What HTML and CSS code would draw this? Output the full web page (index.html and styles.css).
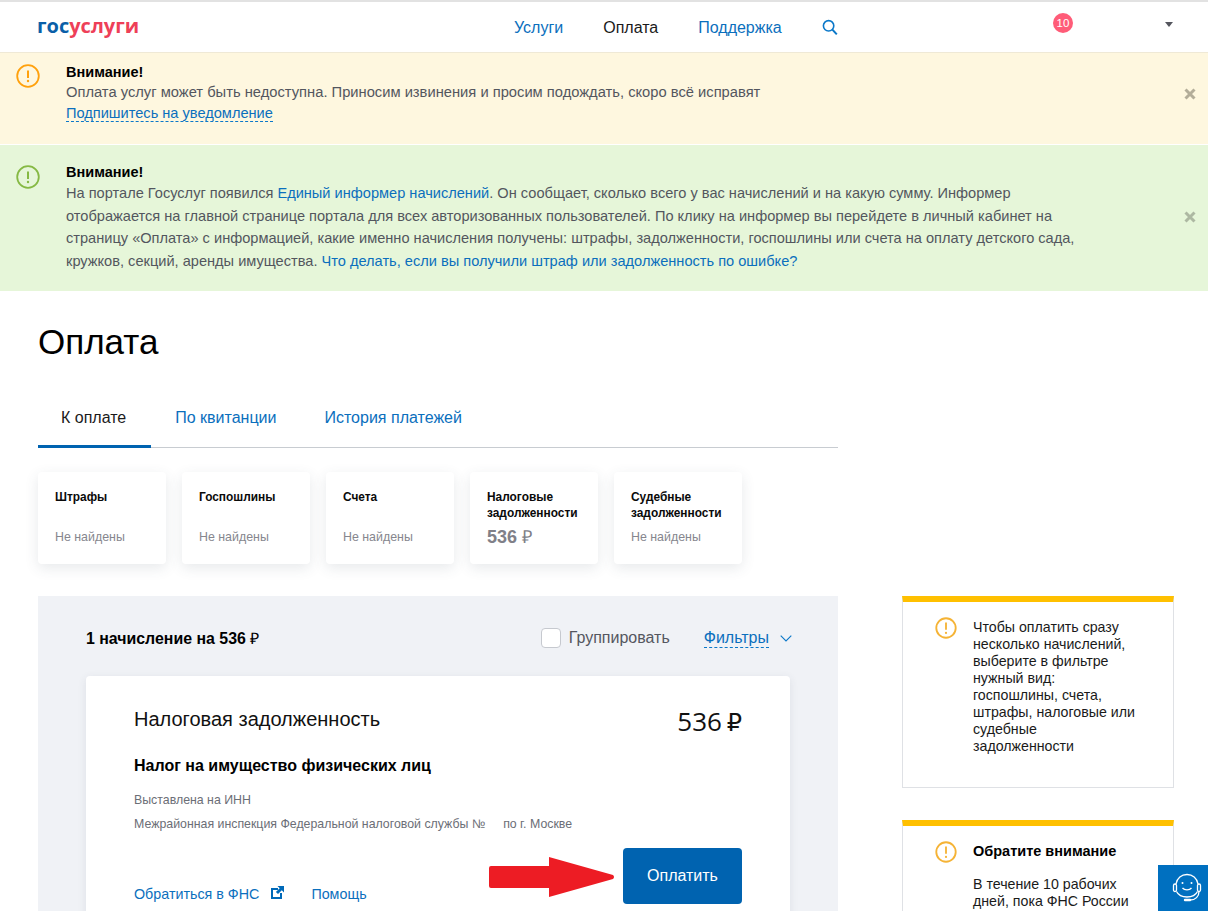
FILE: index.html
```html
<!DOCTYPE html>
<html lang="ru">
<head>
<meta charset="utf-8">
<title>Оплата</title>
<link rel="stylesheet" href="styles.css">
</head>
<body>
<header class="header">
  <a class="logo"><span class="logo-blue">гос</span><span class="logo-red">услуги</span></a>
  <nav class="nav">
    <a class="nav-link">Услуги</a>
    <a class="nav-link nav-active">Оплата</a>
    <a class="nav-link">Поддержка</a>
    <svg class="search" width="16" height="17" viewBox="0 0 16 17"><circle cx="6.6" cy="6.8" r="5.2" fill="none" stroke="#0b78c9" stroke-width="1.6"/><path d="M10.4 10.6l4.4 4.8" stroke="#0b78c9" stroke-width="2" fill="none"/></svg>
  </nav>
  <div class="user">
    <span class="badge">10</span>
    <span class="caret"></span>
  </div>
</header>

<section class="alert alert-yellow">
  <svg class="alert-icon" width="24" height="24" viewBox="0 0 24 24"><circle cx="12" cy="12" r="10.8" fill="none" stroke="#ffa10d" stroke-width="1.8"/><path d="M12 6.5v7.5" stroke="#ffa10d" stroke-width="2"/><circle cx="12" cy="17" r="1.2" fill="#ffa10d"/></svg>
  <div class="alert-body">
    <div class="alert-title">Внимание!</div>
    <div>Оплата услуг может быть недоступна. Приносим извинения и просим подождать, скоро всё исправят</div>
    <a class="dashed alert-sub">Подпишитесь на уведомление</a>
  </div>
  <svg class="close" width="12" height="12" viewBox="0 0 12 12"><path d="M1.500 1.500l9 9m0-9l-9 9" stroke="#b3ad99" stroke-width="3" fill="none"/></svg>
</section>

<section class="alert alert-green">
  <svg class="alert-icon" width="24" height="24" viewBox="0 0 24 24"><circle cx="12" cy="12" r="10.8" fill="none" stroke="#86b944" stroke-width="1.8"/><path d="M12 6.5v7.5" stroke="#86b944" stroke-width="2"/><circle cx="12" cy="17" r="1.2" fill="#86b944"/></svg>
  <div class="alert-body">
    <div class="alert-title">Внимание!</div>
    <div>На портале Госуслуг появился <a class="link">Единый информер начислений</a>. Он сообщает, сколько всего у вас начислений и на какую сумму. Информер отображается на главной странице портала для всех авторизованных пользователей. По клику на информер вы перейдете в личный кабинет на страницу «Оплата» с информацией, какие именно начисления получены: штрафы, задолженности, госпошлины или счета на оплату детского сада, кружков, секций, аренды имущества. <a class="link">Что делать, если вы получили штраф или задолженность по ошибке?</a></div>
  </div>
  <svg class="close close-green" width="12" height="12" viewBox="0 0 12 12"><path d="M1.500 1.500l9 9m0-9l-9 9" stroke="#adb8a2" stroke-width="3" fill="none"/></svg>
</section>

<main class="page">
  <h1 class="title">Оплата</h1>
  <div class="tabs">
    <a class="tab tab-active">К оплате</a>
    <a class="tab">По квитанции</a>
    <a class="tab">История платежей</a>
  </div>
  <div class="cards">
    <div class="card"><div class="card-title">Штрафы</div><div class="card-note">Не найдены</div></div>
    <div class="card"><div class="card-title">Госпошлины</div><div class="card-note">Не найдены</div></div>
    <div class="card"><div class="card-title">Счета</div><div class="card-note">Не найдены</div></div>
    <div class="card"><div class="card-title">Налоговые<br>задолженности</div><div class="card-sum">536 <span class="rub">₽</span></div></div>
    <div class="card"><div class="card-title">Судебные<br>задолженности</div><div class="card-note">Не найдены</div></div>
  </div>

  <div class="columns">
    <section class="panel">
      <div class="panel-head">
        <div class="panel-count">1 начисление на 536 <span class="rub">₽</span></div>
        <label class="group"><span class="checkbox"></span>Группировать</label>
        <a class="filters"><span class="dashed">Фильтры</span>
          <svg width="12" height="7" viewBox="0 0 12 7"><path d="M.7.7L6 6l5.3-5.3" fill="none" stroke="#0b78c9" stroke-width="1.1"/></svg>
        </a>
      </div>
      <article class="bill">
        <div class="bill-top">
          <div class="bill-type">Налоговая задолженность</div>
          <div class="bill-sum">536 <span class="rub-big">₽</span></div>
        </div>
        <div class="bill-name">Налог на имущество физических лиц</div>
        <div class="bill-meta">Выставлена на ИНН</div>
        <div class="bill-meta bill-meta-2">Межрайонная инспекция Федеральной налоговой службы №<span class="gap"></span>по г. Москве</div>
        <div class="bill-foot">
          <a class="bill-link">Обратиться в ФНС</a>
          <svg class="ext" width="13" height="13" viewBox="0 0 13 13"><path d="M0 2h7v2H2v7h7V7h2v6H0z" fill="#0069b8"/><path d="M6.500 0H13v6.500l-2.200-2.200-3.800 3.800-2.100-2.100 3.800-3.800z" fill="#0069b8"/></svg>
          <a class="bill-link help">Помощь</a>
          <svg class="arrow" width="126" height="41" viewBox="0 0 126 41"><path d="M2 9h58V0l64 18q2 2 0 4L60 40v-9H2q-2 0-2-2V11q0-2 2-2z" fill="#ed1c24"/></svg>
          <a class="pay">Оплатить</a>
        </div>
      </article>
    </section>

    <aside class="side">
      <div class="note">
        <svg class="note-icon" width="22" height="22" viewBox="0 0 24 24"><circle cx="12" cy="12" r="10.6" fill="none" stroke="#f5b335" stroke-width="2"/><path d="M12 6v8" stroke="#f5b335" stroke-width="2"/><circle cx="12" cy="17.400" r="1.200" fill="#f5b335"/></svg>
        <div class="note-text">Чтобы оплатить сразу несколько начислений, выберите в фильтре нужный вид: госпошлины, счета, штрафы, налоговые или судебные задолженности</div>
      </div>
      <div class="note">
        <svg class="note-icon" width="22" height="22" viewBox="0 0 24 24"><circle cx="12" cy="12" r="10.6" fill="none" stroke="#f5b335" stroke-width="2"/><path d="M12 6v8" stroke="#f5b335" stroke-width="2"/><circle cx="12" cy="17.400" r="1.200" fill="#f5b335"/></svg>
        <div class="note-text">
          <div class="note-title">Обратите внимание</div>
          В течение 10 рабочих дней, пока ФНС России
        </div>
      </div>
    </aside>
  </div>
</main>

<a class="chat">
  <svg width="32" height="32" viewBox="0 0 32 32" fill="none" stroke="#fff" stroke-width="1.300"><path d="M5 12C6 6 10.500 2.500 16 2.500S26 6 27 12"/><path d="M5.500 19.500C7.500 23.500 11.500 25 16 25s8.500-1.500 10.500-5.500"/><rect x="2.500" y="12" width="3" height="7.500" rx="1.500"/><rect x="26.500" y="12" width="3" height="7.500" rx="1.500"/><path d="M11.500 16c2 2.500 7 2.500 9 0"/><path d="M28 19.500c0 5-3.500 8.500-9 8.500"/><path d="M14 28h5" stroke-width="2.400" stroke-linecap="round"/><circle cx="11.500" cy="11" r="1" fill="#fff" stroke="none"/><circle cx="20.500" cy="11" r="1" fill="#fff" stroke="none"/></svg>
</a>
</body>
</html>
```

FILE: styles.css
```css
* { box-sizing: border-box; }
html, body { height: 911px; overflow: hidden; }
body {
  margin: 0;
  background: #fff;
  color: #000;
  font-family: "Liberation Sans", Arial, sans-serif;
  font-size: 14px;
}
a { cursor: pointer; }

.header {
  height: 53px;
  border-top: 2px solid #e2e2e2;
  border-bottom: 1px solid #efe9d6;
  display: flex;
  align-items: center;
  position: relative;
  padding-left: 37px;
}
.logo {
  font-family: "Open Sans", sans-serif;
  font-size: 20px;
  font-weight: 700;
  line-height: 24px;
  width: 477px;
  margin-top: -2px;
}
.logo-blue { color: #0a5fa8; }
.logo-red { color: #ee3f58; }
.nav { display: flex; align-items: center; font-size: 16px; gap: 40px; margin-top: 1px; }
.nav-link { color: #0b6fbd; }
.nav-active { color: #1a1a1a; }
.user { margin-left: auto; width: 121px; margin-right: 34px; display: flex; justify-content: space-between; align-items: center; margin-top: -5px; }
.badge {
  width: 20px; height: 20px; border-radius: 50%;
  background: #ff5c78; color: #fff;
  font-size: 11.500px; line-height: 20px; text-align: center;
  margin-top: -3px;
}
.caret { width: 0; height: 0; border: 4px solid transparent; border-top: 5px solid #55565e; border-bottom: 0; margin-right: 1px; }

.alert {
  display: flex;
  color: #53565e;
  padding-left: 16px;
  position: relative;
}
.alert-yellow { background: #fef7df; height: 91px; padding-top: 9px; margin-bottom: 1px; font-size: 14.730px; line-height: 21px; }
.alert-green { background: #e6f6d9; height: 146px; padding-top: 17px; font-size: 14.600px; line-height: 22.700px; }
.alert-icon { flex: none; margin-top: 2px; }
.alert-green .alert-icon { margin-top: 3px; }
.alert-body { margin-left: 26px; width: 1014px; }
.alert-title { font-weight: 700; color: #000; font-size: 14.500px; line-height: 20px; }
.alert-sub { font-size: 14.600px; }
.link { color: #0b6fbd; }
.dashed { color: #0b6fbd; border-bottom: 1px dashed #0b78c9; }
.close { position: absolute; right: 12px; top: 35px; }
.close-green { top: 66px; }

.page { padding: 0 34px 0 38px; }
.title { font-size: 35px; font-weight: 400; line-height: 42px; margin: 30px 0 0; color: #000; }
.tabs {
  width: 800px;
  margin-top: 37px;
  display: flex;
  border-bottom: 1px solid #c8ccd1;
  font-size: 16px;
  height: 48px;
}
.tab { color: #0b6fbd; margin-right: 48px; line-height: 36px; }
.tab-active { color: #1a1a1a; padding: 0 25px 0 23px; border-bottom: 3px solid #0063b0; height: 48px; margin-right: 24px; }

.cards { display: flex; gap: 16px; margin-top: 24px; }
.card {
  width: 128px; height: 92px;
  padding: 17px;
  border-radius: 4px;
  background: #fff;
  box-shadow: 0 4px 14px rgba(60, 70, 90, .12);
}
.card-title { font-size: 11.900px; font-weight: 700; line-height: 16px; height: 40px; color: #0a0a0a; white-space: nowrap; }
.card-note { font-size: 12.400px; line-height: 16px; color: #86868e; }
.card-sum { font-size: 18px; font-weight: 700; line-height: 22px; color: #808088; margin-top: -3px; }
.rub { font-weight: 400; }

.columns { display: flex; align-items: flex-start; gap: 64px; margin-top: 32px; }
.panel { width: 800px; background: #f0f2f6; padding: 0 48px; height: 400px; flex: none; }
.panel-head { display: flex; align-items: center; height: 80px; padding-top: 4px; font-size: 16px; }
.panel-count { font-size: 15.900px; font-weight: 700; flex: 1; }
.group { display: flex; align-items: center; color: #55575f; }
.checkbox { width: 20px; height: 20px; border: 1px solid #c6c9cf; border-radius: 4px; background: #fff; margin-right: 8px; }
.filters { margin-left: 34px; margin-right: -2px; display: flex; align-items: center; gap: 11px; }
.bill {
  background: #fff;
  border-radius: 4px;
  box-shadow: 0 2px 8px rgba(60, 70, 90, .1);
  padding: 29px 48px 30px;
  height: 320px;
}
.bill-top { display: flex; justify-content: space-between; }
.bill-type { font-size: 20px; line-height: 28px; color: #111; }
.bill-sum { font-family: "Open Sans", sans-serif; font-size: 26px; line-height: 32px; color: #111; white-space: nowrap; word-spacing: -2px; }
.rub-big { font-family: "DejaVu Sans", sans-serif; font-size: 24px; }
.bill-name { font-size: 16px; font-weight: 700; line-height: 20px; margin-top: 17px; }
.bill-meta { font-size: 12.350px; line-height: 16px; color: #6b6e76; margin-top: 16px; }
.bill-meta-2 { margin-top: 8px; }
.gap { display: inline-block; width: 18px; }
.bill-foot { display: flex; align-items: flex-end; margin-top: 16px; position: relative; height: 56px; }
.bill-link { color: #0b6fbd; font-size: 14.300px; line-height: 16px; padding-bottom: 2px; }
.ext { margin: 0 0 5px 12px; }
.help { margin-left: 27px; }
.arrow { position: absolute; left: 355px; top: 9px; }
.pay {
  margin-left: auto;
  width: 119px; height: 56px;
  background: #0063b0;
  color: #fff;
  border-radius: 4px;
  font-size: 16px;
  line-height: 56px;
  text-align: center;
}

.side { width: 272px; flex: none; }
.note {
  border: 1px solid #dfe1e5;
  border-top: 6px solid #ffc000;
  display: flex;
  padding: 17px 33px 33px 32px;
  height: 192px;
  margin-bottom: 32px;
  font-size: 14.200px;
  line-height: 17px;
  color: #1a1a1a;
}
.note-icon { flex: none; margin: -2px 16px 0 0; }
.note-title { font-weight: 700; font-size: 14.500px; margin-bottom: 16px; color: #000; }
.chat {
  position: fixed; right: 0; bottom: 0;
  width: 50px; height: 46px;
  background: #0070c0;
  display: flex; align-items: center;
  padding-left: 13px;
}
```
